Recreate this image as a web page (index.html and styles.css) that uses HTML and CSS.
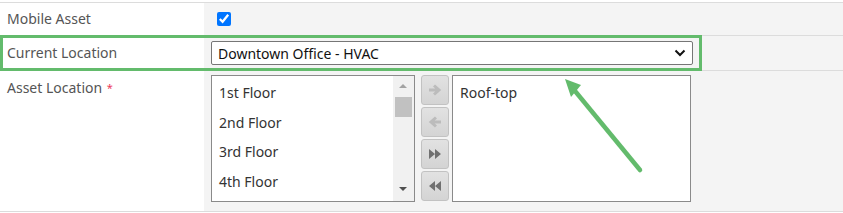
FILE: index.html
```html
<!DOCTYPE html>
<html>
<head>
	<meta charset="utf-8">
	<title>Asset</title>
	<link rel="stylesheet" href="styles.css">
</head>
<body>
	<div class="form">
		<div class="row rowCheck">
			<div class="label">Mobile Asset</div>
			<div class="field"><input type="checkbox" checked class="check"></div>
		</div>
		<div class="row rowSelect">
			<div class="label">Current Location</div>
			<div class="field">
				<span class="selectWrap">
					<select class="location">
						<option>Downtown Office - HVAC</option>
					</select>
					<svg class="chevron" width="12" height="8" viewBox="0 0 12 8"><path d="M1.5 1.5L6 6l4.5-4.5" fill="none" stroke="#111" stroke-width="2"/></svg>
				</span>
			</div>
		</div>
		<div class="row rowPicker">
			<div class="label">Asset Location <span class="req">*</span></div>
			<div class="field picker">
				<div class="listBox leftList">
					<ul class="items">
						<li>1st Floor</li>
						<li>2nd Floor</li>
						<li>3rd Floor</li>
						<li>4th Floor</li>
					</ul>
					<div class="scrollBar">
						<span class="up"></span>
						<span class="thumb"></span>
						<span class="down"></span>
					</div>
				</div>
				<div class="moveBtns">
					<button class="btn off">
						<svg width="14" height="12" viewBox="0 0 14 12"><path d="M1 6h8M6 1.5l5 4.5-5 4.5" fill="none" stroke="#bcbcbc" stroke-width="3"/></svg>
					</button>
					<button class="btn off">
						<svg width="14" height="12" viewBox="0 0 14 12"><path d="M13 6H5M8 1.5L3 6l5 4.5" fill="none" stroke="#bcbcbc" stroke-width="3"/></svg>
					</button>
					<button class="btn">
						<svg width="14" height="12" viewBox="0 0 14 12"><path d="M1 1l6 5-6 5zM7 1l6 5-6 5z" fill="#707070"/></svg>
					</button>
					<button class="btn">
						<svg width="14" height="12" viewBox="0 0 14 12"><path d="M13 1L7 6l6 5zM7 1L1 6l6 5z" fill="#707070"/></svg>
					</button>
				</div>
				<div class="listBox rightList">
					<ul class="items">
						<li>Roof-top</li>
					</ul>
				</div>
			</div>
		</div>
	</div>

	<!-- annotation over the screenshot -->
	<div class="callout"></div>
	<svg class="pointer" width="100" height="110" viewBox="0 0 100 110">
		<path d="M78 92L13 13" stroke="#63bb6c" stroke-width="4.5" stroke-linecap="round"/>
		<path d="M3 1L19 7 9 19z" fill="#63bb6c"/>
	</svg>
</body>
</html>
```

FILE: styles.css
```css
*{
	margin: 0px;
	padding: 0px;
	box-sizing: border-box;
}
body{
	font-family: "Noto Sans", "Open Sans", sans-serif;
	font-size: 14px;
	color: #444;
	background-color: #fff;
	position: relative;
	width: 843px;
	height: 213px;
	overflow: hidden;
}
.form{
	margin-top: 2px;
	border-top: 1px solid #dcdcdc;
}
.row{
	display: grid;
	grid-template-columns: 204px 1fr;
	border-bottom: 1px solid #dcdcdc;
}
.label{
	padding-left: 7px;
	color: #555;
}
.field{
	background-color: #f4f4f4;
	padding-left: 7px;
}
.rowCheck{
	height: 33px;
}
.rowCheck .label{
	line-height: 32px;
}
.check{
	width: 14px;
	height: 14px;
	margin: 9px 0 0 6px;
	accent-color: #0075ff;
}
.rowSelect{
	height: 35px;
}
.rowSelect .label{
	line-height: 34px;
}
.rowSelect .field{
	padding-top: 5px;
}
.selectWrap{
	position: relative;
	display: block;
	width: 482px;
}
.location{
	display: block;
	width: 482px;
	height: 24px;
	font-family: "Noto Sans", "Open Sans", sans-serif;
	font-size: 14px;
	color: #111;
	padding-left: 6px;
	border: 1px solid #767676;
	border-radius: 2px;
	background-color: #fff;
	appearance: none;
}
.chevron{
	position: absolute;
	right: 7px;
	top: 8px;
	pointer-events: none;
}
.rowPicker{
	height: 141px;
}
.rowPicker .label{
	padding-top: 7px;
	line-height: 20px;
}
.req{
	color: #ec3a5a;
	font-size: 11px;
	vertical-align: top;
	margin-left: 1px;
}
.picker{
	display: flex;
	padding-top: 4px;
}
.listBox{
	height: 127px;
	border: 1px solid #8a8a8a;
	background-color: #fff;
	display: flex;
}
.leftList{
	width: 204px;
}
.rightList{
	width: 239px;
	margin-left: 3px;
}
.items{
	flex: 1;
	list-style-type: none;
	padding: 2px 0 0 7px;
	color: #333;
}
.items li{
	line-height: 29.5px;
}
.scrollBar{
	width: 21px;
	background-color: #f1f1f1;
	position: relative;
}
.thumb{
	display: block;
	position: absolute;
	left: 2px;
	top: 21px;
	width: 17px;
	height: 20px;
	background-color: #c1c1c1;
}
.up, .down{
	display: block;
	position: absolute;
	left: 6px;
	width: 0;
	height: 0;
	border-left: 4px solid transparent;
	border-right: 4px solid transparent;
}
.up{
	top: 8px;
	border-bottom: 4px solid #a3a3a3;
}
.down{
	bottom: 10px;
	border-top: 4px solid #505050;
}
.moveBtns{
	display: flex;
	flex-direction: column;
	gap: 2px;
	margin-left: 6px;
}
.btn{
	width: 28px;
	height: 30px;
	border: 1px solid #c2c2c2;
	border-radius: 3px;
	background: linear-gradient(#e2e2e2, #d4d4d4);
	display: flex;
	align-items: center;
	justify-content: center;
}
.btn svg{
	display: block;
}
.callout{
	position: absolute;
	left: 0px;
	top: 35px;
	width: 702px;
	height: 36px;
	border: 3px solid #63bb6c;
}
.pointer{
	position: absolute;
	left: 562px;
	top: 78px;
}
```
